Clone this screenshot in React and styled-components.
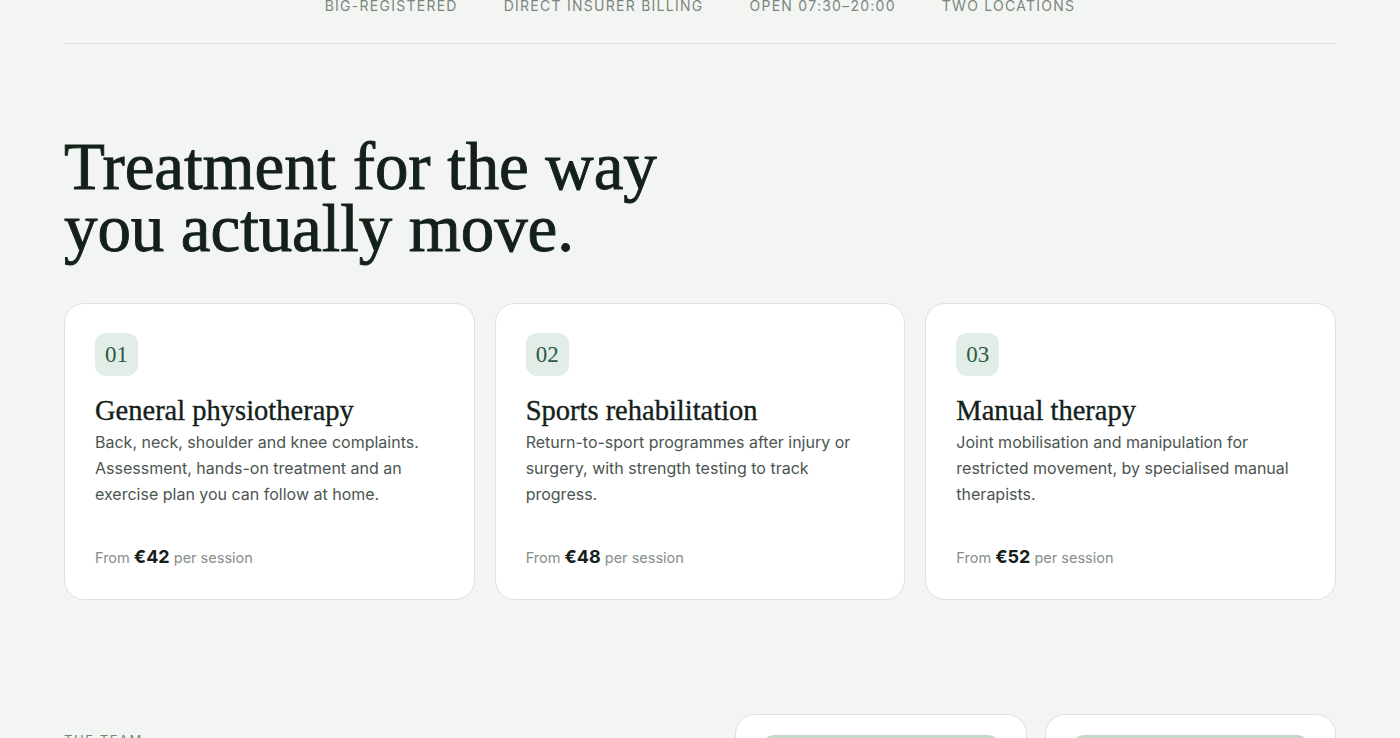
import React from "react";
import styled, { createGlobalStyle } from "styled-components";

const GlobalStyle = createGlobalStyle`
  html, body {
    margin: 0;
    padding: 0;
    background: #f3f5f2;
    color: #15211b;
    font-family: "Inter", "Liberation Sans", sans-serif;
  }
  * {
    box-sizing: border-box;
  }
`;

const Page = styled.main`
  width: 1272px;
  margin: 0 auto;
`;

const TrustStrip = styled.ul`
  list-style: none;
  margin: -4px 0 0;
  padding: 0 0 27px;
  display: flex;
  justify-content: center;
  gap: 46px;
  border-bottom: 1px solid #dde2de;
`;

const TrustItem = styled.li`
  font-size: 14px;
  line-height: 20px;
  letter-spacing: 0.09em;
  text-transform: uppercase;
  color: #7b8680;
`;

const Treatments = styled.section`
  padding-top: 91px;
`;

const Heading = styled.h2`
  margin: 0;
  font-family: "Liberation Serif", serif;
  font-weight: 400;
  font-size: 67px;
  line-height: 62px;
  letter-spacing: -0.1px;
  color: #14211a;
  -webkit-text-stroke: 0.9px #14211a;
`;

const CardGrid = styled.div`
  display: grid;
  grid-template-columns: repeat(3, 1fr);
  gap: 20px;
  margin-top: 44px;
`;

const Card = styled.article`
  background: #ffffff;
  border: 1px solid #dde2de;
  border-radius: 20px;
  padding: 29px 30px 29px;
  display: flex;
  flex-direction: column;
`;

const Badge = styled.span`
  width: 43px;
  height: 43px;
  border-radius: 11px;
  background: #e3ede7;
  color: #2b5a44;
  display: flex;
  align-items: center;
  justify-content: center;
  font-family: "Liberation Serif", serif;
  font-size: 23px;
`;

const CardTitle = styled.h3`
  margin: 18px 0 1px;
  font-family: "Liberation Serif", serif;
  font-weight: 400;
  font-size: 28.5px;
  line-height: 34px;
  color: #14211a;
  -webkit-text-stroke: 0.35px #14211a;
`;

const CardText = styled.p`
  margin: 0;
  font-size: 16px;
  line-height: 26px;
  color: #4b5550;
`;

const Price = styled.p`
  margin: auto 0 0;
  padding-top: 38px;
  font-size: 14.5px;
  line-height: 24px;
  color: #858e89;
`;

const Amount = styled.strong`
  font-size: 18px;
  font-weight: 700;
  color: #15201a;
`;

const Team = styled.section`
  margin-top: 114px;
  display: grid;
  grid-template-columns: 1fr 601px;
  align-items: start;
`;

const Eyebrow = styled.span`
  display: block;
  margin-top: 17px;
  font-size: 13px;
  line-height: 18px;
  letter-spacing: 0.12em;
  text-transform: uppercase;
  color: #72837b;
`;

const MemberGrid = styled.div`
  display: grid;
  grid-template-columns: repeat(2, 1fr);
  gap: 18px;
`;

const MemberCard = styled.div`
  background: #ffffff;
  border: 1px solid #dde2de;
  border-radius: 20px;
  padding: 20px 26px 26px;
`;

const Portrait = styled.div`
  height: 280px;
  border-radius: 12px;
  background: linear-gradient(180deg, #c5d6cd 0%, #dfe9e3 100%);
`;

const treatments = [
  {
    num: "01",
    title: "General physiotherapy",
    text: "Back, neck, shoulder and knee complaints. Assessment, hands-on treatment and an exercise plan you can follow at home.",
    price: 42,
  },
  {
    num: "02",
    title: "Sports rehabilitation",
    text: "Return-to-sport programmes after injury or surgery, with strength testing to track progress.",
    price: 48,
  },
  {
    num: "03",
    title: "Manual therapy",
    text: "Joint mobilisation and manipulation for restricted movement, by specialised manual therapists.",
    price: 52,
  },
];

const trust = ["BIG-registered", "Direct insurer billing", "Open 07:30–20:00", "Two locations"];

const App = () => {
  return (
    <>
      <GlobalStyle />
      <Page>
        <TrustStrip>
          {trust.map((t) => (
            <TrustItem key={t}>{t}</TrustItem>
          ))}
        </TrustStrip>

        <Treatments>
          <Heading>
            Treatment for the way
            <br />
            you actually move.
          </Heading>
          <CardGrid>
            {treatments.map((t) => (
              <Card key={t.num}>
                <Badge>{t.num}</Badge>
                <CardTitle>{t.title}</CardTitle>
                <CardText>{t.text}</CardText>
                <Price>
                  From <Amount>€{t.price}</Amount> per session
                </Price>
              </Card>
            ))}
          </CardGrid>
        </Treatments>

        <Team>
          <div>
            <Eyebrow>The team</Eyebrow>
          </div>
          <MemberGrid>
            <MemberCard>
              <Portrait />
            </MemberCard>
            <MemberCard>
              <Portrait />
            </MemberCard>
          </MemberGrid>
        </Team>
      </Page>
    </>
  );
};

export default App;
